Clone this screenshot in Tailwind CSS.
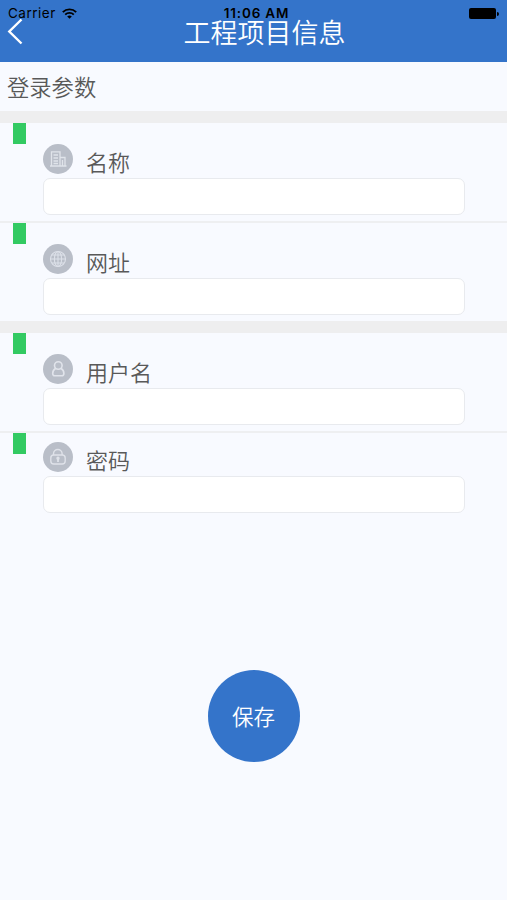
<!DOCTYPE html>
<html lang="zh-CN">

<head>
    <meta charset="UTF-8">
    <meta name="viewport" content="width=device-width, initial-scale=1.0">
    <title>工程项目信息</title>
    <script src="https://cdn.jsdelivr.net/npm/@tailwindcss/browser@4"></script>
</head>

<body class="min-h-screen bg-[#f8faff] font-['Noto_Sans_CJK_SC',sans-serif] font-[350] text-[#595959]">
    <!-- Navigation bar -->
    <header class="relative h-[62px] bg-[#3474ca]">
        <div class="flex h-[27px] items-center px-2 font-['Inter',sans-serif] text-black">
            <div class="flex flex-1 items-center">
                <span class="mt-px text-[13.5px] leading-none font-normal tracking-[0.5px]">Carrier</span>
                <svg class="ml-[6px] h-[11px] w-[15px]" viewBox="0 0 15 11" fill="none" stroke="currentColor" stroke-width="1.9">
                    <path d="M.8 4.1a9.6 9.6 0 0 1 13.4 0M3.2 6.6a6.2 6.2 0 0 1 8.6 0" />
                    <path d="M7.5 10.8 5.2 8.5a3.3 3.3 0 0 1 4.6 0z" fill="currentColor" stroke="none" />
                </svg>
            </div>
            <span class="mt-px ml-[6px] text-[13.5px] leading-none font-semibold tracking-[0.8px]">11:06 AM</span>
            <div class="flex flex-1 items-center justify-end">
                <span class="h-[11px] w-[27px] rounded-[2px] bg-black"></span>
                <span class="ml-px h-1 w-[2px] rounded-r-full bg-black"></span>
            </div>
        </div>
        <div class="absolute inset-x-0 top-[11px] flex h-10 items-center justify-center text-white">
            <svg class="absolute top-[7px] left-[7px] h-[27px] w-[16px]" viewBox="0 0 16 27" fill="none" stroke="currentColor" stroke-width="2.4">
                <path d="M14.5 1.5 2.3 13.5 14.5 25.5" />
            </svg>
            <h1 class="ml-[22px] text-[27px] leading-none">工程项目信息</h1>
        </div>
    </header>

    <main>
        <h2 class="flex h-[49px] items-center pl-[7px] text-[22.3px] leading-none">登录参数</h2>

        <!-- Project -->
        <section class="border-t-[12px] border-[#eeeeef]">
            <div class="flex h-[98px]">
                <span class="ml-[13px] h-[21px] w-[12.5px] bg-[#33ca62]"></span>
                <div class="ml-[17.5px] pt-[20px]">
                    <div class="flex h-[35px]">
                        <svg class="mt-px size-[30px]" viewBox="0 0 30 30" fill="none" stroke="#e0e4ea" stroke-width="1.3">
                            <circle cx="15" cy="15" r="15" fill="#b9bec8" stroke="none" />
                            <path d="M7 22h16.5M8.5 22V7.8H17V22M17 13.5h5V22M10.5 11h4.5M10.5 14h4.5M10.5 17h4.5M10.5 19.5h4.5M19.5 16v6" />
                        </svg>
                        <label for="name" class="mt-[7px] ml-[13px] text-[22px] leading-none">名称</label>
                    </div>
                    <input id="name" type="text" class="block h-[37px] w-[422px] rounded-[7px] border border-[#e8eaee] bg-white px-3">
                </div>
            </div>
            <div class="flex h-[100px] border-t-2 border-[#eeeff1]">
                <span class="ml-[13px] h-[21px] w-[12.5px] bg-[#33ca62]"></span>
                <div class="ml-[17.5px] pt-[20px]">
                    <div class="flex h-[35px]">
                        <svg class="mt-px size-[30px]" viewBox="0 0 30 30" fill="none" stroke="#dde1e9" stroke-width="1.1">
                            <circle cx="15" cy="15" r="15" fill="#b9bec8" stroke="none" />
                            <circle cx="15" cy="15" r="7.5" />
                            <ellipse cx="15" cy="15" rx="3.6" ry="7.5" />
                            <path d="M15 7.5v15M7.5 15h15M9 11h12M9 19h12" />
                        </svg>
                        <label for="url" class="mt-[7px] ml-[13px] text-[22px] leading-none">网址</label>
                    </div>
                    <input id="url" type="text" class="block h-[37px] w-[422px] rounded-[7px] border border-[#e8eaee] bg-white px-3">
                </div>
            </div>
        </section>

        <!-- Account -->
        <section class="border-t-[12px] border-[#eeeeef]">
            <div class="flex h-[98px]">
                <span class="ml-[13px] h-[21px] w-[12.5px] bg-[#33ca62]"></span>
                <div class="ml-[17.5px] pt-[20px]">
                    <div class="flex h-[35px]">
                        <svg class="mt-px size-[30px]" viewBox="0 0 30 30" fill="none" stroke="#e1e4eb" stroke-width="1.6">
                            <circle cx="15" cy="15" r="15" fill="#b9bec8" stroke="none" />
                            <circle cx="15.3" cy="11.5" r="3.8" />
                            <path d="M12.7 14.3c-2.1 1.3-3 3-3 5.2 0 1.6.7 2.3 2.2 2.3h6.8c1.5 0 2.2-.7 2.2-2.3 0-2.2-.9-3.9-3-5.2" />
                        </svg>
                        <label for="username" class="mt-[7px] ml-[13px] text-[22px] leading-none">用户名</label>
                    </div>
                    <input id="username" type="text" class="block h-[37px] w-[422px] rounded-[7px] border border-[#e8eaee] bg-white px-3">
                </div>
            </div>
            <div class="flex h-[100px] border-t-2 border-[#eeeff1]">
                <span class="ml-[13px] h-[21px] w-[12.5px] bg-[#33ca62]"></span>
                <div class="ml-[17.5px] pt-[8px]">
                    <div class="flex h-[35px]">
                        <svg class="mt-px size-[30px]" viewBox="0 0 30 30" fill="none" stroke="#dfe2e9" stroke-width="1.4">
                            <circle cx="15" cy="15" r="15" fill="#b9bec8" stroke="none" />
                            <path d="M10.5 13v-1.2a4.3 4.3 0 0 1 8.6 0V13" />
                            <rect x="7.8" y="13" width="14.4" height="9" rx="3" />
                            <path d="M15 16.5v3.5" stroke-width="1.8" />
                            <circle cx="15" cy="16.3" r="1" fill="#dfe2e9" />
                        </svg>
                        <label for="password" class="mt-[7px] ml-[13px] text-[22px] leading-none">密码</label>
                    </div>
                    <input id="password" type="password" class="block h-[37px] w-[422px] rounded-[7px] border border-[#e8eaee] bg-white px-3">
                </div>
            </div>
        </section>

        <div class="mt-[139px] flex justify-center">
            <button type="button" class="size-[92px] rounded-full bg-[#3474ca] pb-px text-[21.5px] leading-none text-white">保存</button>
        </div>
    </main>
</body>

</html>
